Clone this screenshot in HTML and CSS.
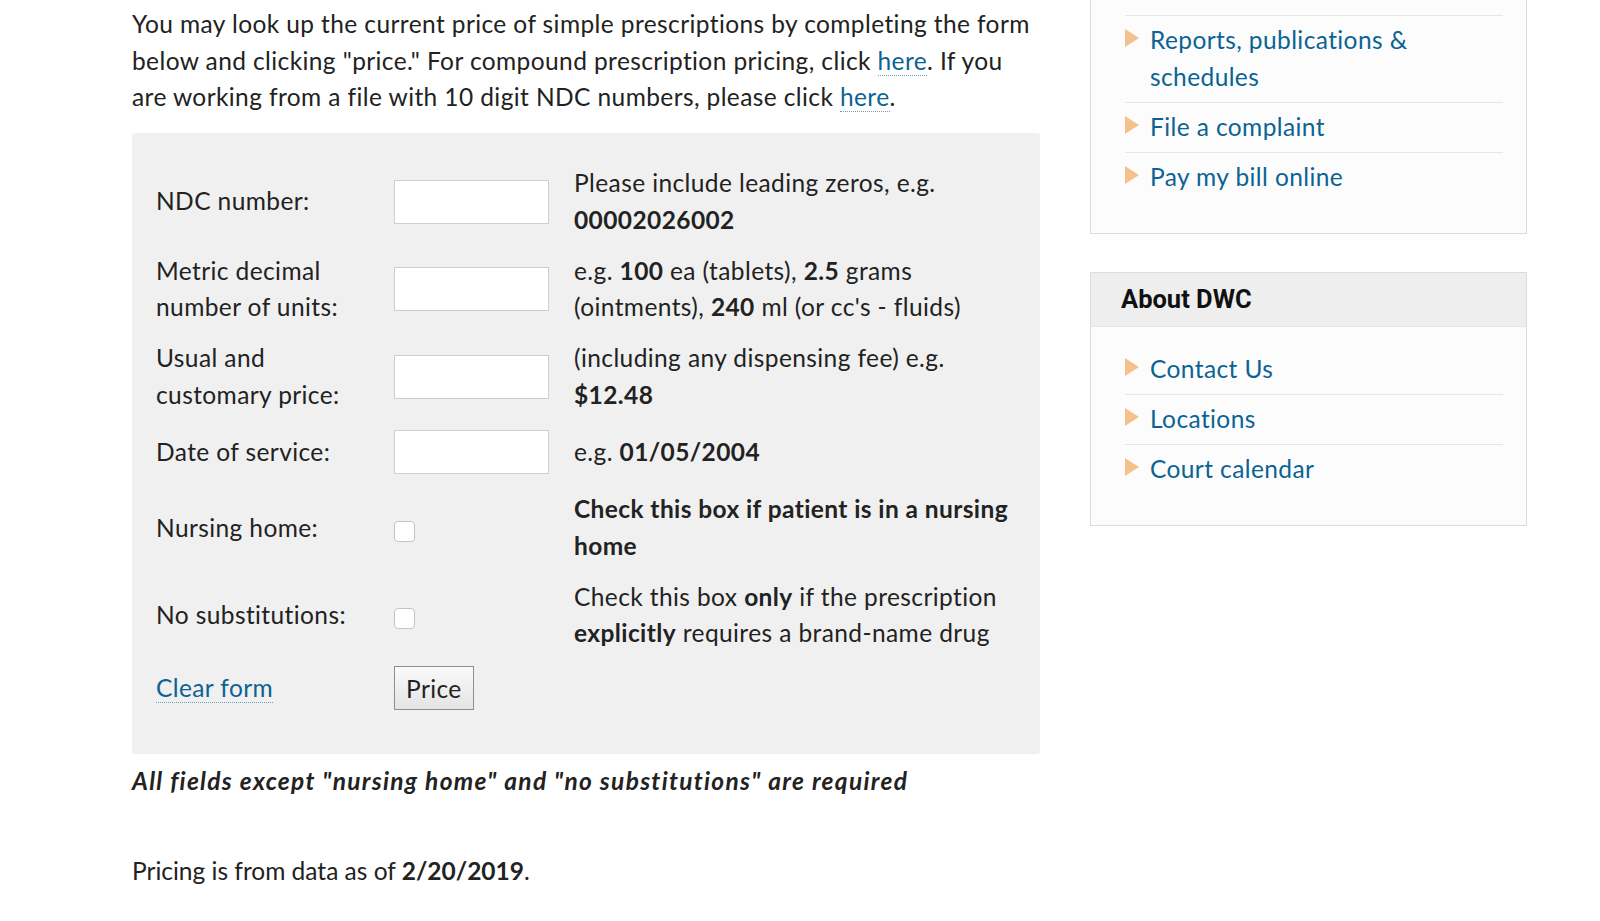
FILE: index.html
```html
<!DOCTYPE html>
<html lang="en">
<head>
  <meta charset="UTF-8" />
  <meta name="viewport" content="width=device-width, initial-scale=1.0"/>
  <title>Pharmacy fee calculator</title>
  <link rel="stylesheet" href="styles.css">
</head>
<body>
  <div class="page">
    <main class="content">
      <p class="intro">
        You may look up the current price of simple prescriptions by completing the form<br>
        below and clicking "price." For compound prescription pricing, click <a href="#">here</a>. If you<br>
        are working from a file with 10 digit NDC numbers, please click <a href="#">here</a>.
      </p>

      <form class="rx-form" id="rxForm">
        <table>
          <tr>
            <td class="label"><label for="ndc">NDC number:</label></td>
            <td class="field"><input type="text" id="ndc" name="ndc" /></td>
            <td class="hint">Please include leading zeros, e.g.<br><strong>00002026002</strong></td>
          </tr>
          <tr>
            <td class="label"><label for="units">Metric decimal<br>number of units:</label></td>
            <td class="field"><input type="text" id="units" name="units" /></td>
            <td class="hint">e.g. <strong>100</strong> ea (tablets), <strong>2.5</strong> grams<br>(ointments), <strong>240</strong> ml (or cc's - fluids)</td>
          </tr>
          <tr>
            <td class="label"><label for="price">Usual and<br>customary price:</label></td>
            <td class="field"><input type="text" id="price" name="price" /></td>
            <td class="hint">(including any dispensing fee) e.g.<br><strong>$12.48</strong></td>
          </tr>
          <tr class="single">
            <td class="label"><label for="dos">Date of service:</label></td>
            <td class="field"><input type="text" id="dos" name="dos" /></td>
            <td class="hint">e.g. <strong>01/05/2004</strong></td>
          </tr>
          <tr>
            <td class="label"><label for="nursing">Nursing home:</label></td>
            <td class="field"><input type="checkbox" id="nursing" name="nursing" /></td>
            <td class="hint"><strong>Check this box if patient is in a nursing<br>home</strong></td>
          </tr>
          <tr>
            <td class="label"><label for="nosub">No substitutions:</label></td>
            <td class="field"><input type="checkbox" id="nosub" name="nosub" /></td>
            <td class="hint">Check this box <strong>only</strong> if the prescription<br><strong>explicitly</strong> requires a brand-name drug</td>
          </tr>
          <tr class="actions">
            <td class="label"><a href="#" class="clear-link" id="clearForm">Clear form</a></td>
            <td class="field"><button type="submit" class="price-btn">Price</button></td>
            <td></td>
          </tr>
        </table>
      </form>

      <p class="required"><em>All fields except "nursing home" and "no substitutions" are required</em></p>

      <p class="as-of">Pricing is from data as of <strong>2/20/2019</strong>.</p>
    </main>

    <aside class="sidebar">
      <div class="block block-top">
        <ul class="links">
          <li><a href="#">Reports, publications &amp; schedules</a></li>
          <li><a href="#">File a complaint</a></li>
          <li><a href="#">Pay my bill online</a></li>
        </ul>
      </div>

      <div class="block">
        <h2>About DWC</h2>
        <ul class="links">
          <li><a href="#">Contact Us</a></li>
          <li><a href="#">Locations</a></li>
          <li><a href="#">Court calendar</a></li>
        </ul>
      </div>
    </aside>
  </div>

  <script>
    document.getElementById('clearForm').addEventListener('click', (e) => {
      e.preventDefault();
      document.getElementById('rxForm').reset();
    });
  </script>
</body>
</html>
```

FILE: styles.css
```css
body {
  margin: 0;
  padding: 0;
  background: #fff;
  color: #222;
  font-family: 'Lato', 'Open Sans', sans-serif;
  font-size: 24.5px;
  letter-spacing: 0.4px;
  line-height: 36.7px;
}

a {
  color: #0b6394;
  text-decoration: none;
}

.page {
  display: flex;
  align-items: flex-start;
  gap: 50px;
  padding-left: 132px;
}

.content {
  width: 908px;
  flex: none;
}

.intro {
  margin: 6px 0 17px;
  white-space: nowrap;
}

.intro a,
.clear-link {
  border-bottom: 1px dotted #6a9fc0;
}

.rx-form {
  background: #f0f0f0;
  border-radius: 3px;
  padding: 25px 24px 37px;
}

.rx-form table {
  border-collapse: collapse;
  width: 100%;
}

.rx-form td {
  padding: 7px 0;
  vertical-align: middle;
}

.rx-form td.label {
  width: 238px;
}

.rx-form td.field {
  width: 180px;
}

.rx-form tr.single td {
  padding: 10px 0;
}

.rx-form tr.actions td {
  padding: 7px 0;
}

input[type="text"] {
  display: block;
  box-sizing: border-box;
  width: 155px;
  height: 44px;
  margin: 0;
  border: 1px solid #cfcfcf;
  background: #fff;
  font-family: inherit;
  font-size: 20px;
}

input[type="checkbox"] {
  -webkit-appearance: none;
  appearance: none;
  display: block;
  width: 21px;
  height: 21px;
  margin: 6px 0 0;
  border: 1px solid #c4c4c4;
  border-radius: 4px;
  background: #fff;
}

.price-btn {
  display: block;
  height: 44px;
  padding: 0 11px;
  border: 1px solid #8e8e8e;
  border-radius: 0;
  background: linear-gradient(#fafafa, #e4e4e4);
  color: #222;
  font-family: inherit;
  font-size: 24.5px;
  letter-spacing: 0.4px;
  cursor: pointer;
}

.required {
  margin: 9px 0 0;
  font-weight: 700;
  letter-spacing: 1.3px;
}

.as-of {
  margin: 53px 0 0;
  letter-spacing: 0;
}

/* sidebar */

.sidebar {
  width: 437px;
  flex: none;
}

.block {
  box-sizing: border-box;
  background: #fcfcfc;
  border: 1px solid #dcdcdc;
  margin-bottom: 38px;
}

.block-top {
  margin-top: -1px;
}

.block h2 {
  margin: 0;
  height: 53px;
  padding-left: 30px;
  background: #eeeeee;
  border-bottom: 1px solid #e4e4e4;
  font-family: 'Roboto', sans-serif;
  font-size: 25.5px;
  font-weight: 700;
  letter-spacing: 0;
  line-height: 53px;
  color: #111;
}

.links {
  list-style: none;
  margin: 0 23px 0 34px;
  padding: 17px 0 31px;
}

.block-top .links {
  padding-top: 15px;
}

.links li {
  display: flex;
  padding: 6.25px 0;
}

.links li + li,
.block-top .links li {
  border-top: 1px solid #e6e6e6;
}

.links li::before {
  content: '';
  flex: none;
  width: 0;
  height: 0;
  margin: 7px 11px 0 0;
  border-left: 14px solid #f4c08d;
  border-top: 9px solid transparent;
  border-bottom: 9px solid transparent;
}

.links a {
  padding-right: 60px;
}
```
